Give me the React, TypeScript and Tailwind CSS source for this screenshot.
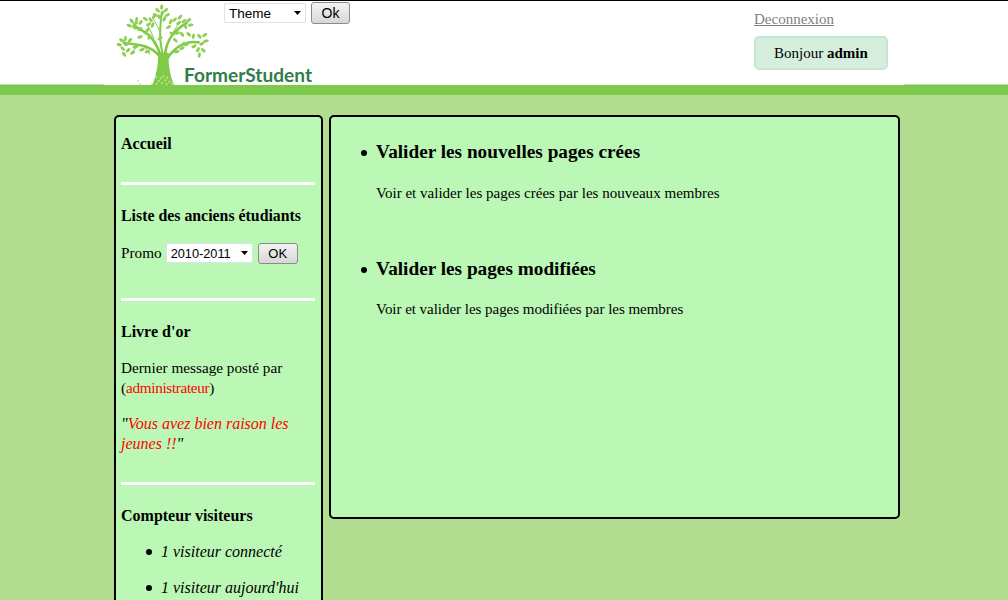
import { ChangeEvent } from 'react';

// leaves of the logo tree: x, y, angle
const leaves = [
  [155, 18, 5], [143, 28, -50], [167, 28, 50], [136, 42, -60], [172, 42, 60], [148, 48, -30], [163, 54, 30], [157, 36, 0],
  [65, 60, -40], [80, 56, 10], [92, 64, 40], [58, 74, -70], [74, 80, -60], [90, 84, 60], [106, 54, -60], [76, 68, 60],
  [122, 56, -40], [116, 70, 60], [132, 46, 30], [112, 88, 30], [128, 72, 20],
  [194, 56, 50], [210, 48, 40], [222, 60, 60], [236, 58, 50], [242, 72, 80], [206, 66, 60], [182, 62, 30], [176, 78, 60], [226, 76, -30],
  [35, 118, -60], [28, 131, -80], [46, 113, 10], [50, 130, 70], [38, 143, -50], [54, 148, 50], [68, 155, 60], [60, 118, 40], [42, 160, -40], [76, 138, 80],
  [96, 146, 70], [112, 152, 80], [118, 108, 30], [90, 108, 70], [150, 112, 60], [186, 98, -60], [202, 96, 70], [216, 100, -40], [196, 118, -50],
  [236, 100, -50], [250, 106, 10], [268, 106, -40], [284, 102, 60], [288, 120, 80], [276, 128, 60], [264, 146, 30], [280, 148, -50], [252, 136, 60], [230, 130, 60], [216, 142, 70], [200, 152, 80], [268, 162, 10],
];

const grass = [
  [132, 236], [138, 228], [146, 240], [152, 232], [160, 226], [166, 238], [172, 230], [178, 242], [140, 248], [156, 246], [170, 250], [186, 248], [126, 248], [84, 240], [90, 250],
];

const TreeLogo = () => (
  <svg viewBox="0 0 300 255" className="w-[100px] h-[85px] shrink-0">
    <g fill="none" stroke="#80ca48" strokeLinecap="round">
      <path d="M158 178C140 150 118 136 88 132S58 128 42 126" strokeWidth="8" />
      <path d="M152 165C142 130 126 104 96 88S80 76 72 72" strokeWidth="8" />
      <path d="M160 165C146 120 150 80 155 35" strokeWidth="6" />
      <path d="M165 160C170 115 192 88 230 66" strokeWidth="8" />
      <path d="M172 172C192 142 222 118 266 124" strokeWidth="8" />
      <path d="M100 132L120 160M132 112L112 70M150 90L128 50M190 92L208 66M222 122L214 146M88 132L66 152" strokeWidth="3" />
    </g>
    <path d="M126 255C138 225 146 190 144 155L176 155C174 195 182 230 194 255Z" fill="#80ca48" />
    <g fill="#8ccf52">
      {leaves.map(([x, y, a], i) => (
        <ellipse key={i} cx={x} cy={y} rx="4.5" ry="8.5" transform={`rotate(${a} ${x} ${y})`} />
      ))}
    </g>
    <g fill="#c5e6a4">
      {grass.map(([x, y], i) => (
        <circle key={i} cx={x} cy={y} r="3" />
      ))}
    </g>
  </svg>
);

const Dropdown = ({ value, className }: { value: string; className: string }) => (
  <div className={`relative shrink-0 ${className}`}>
    <select
      value={value}
      onChange={(_e: ChangeEvent<HTMLSelectElement>) => {}}
      className="appearance-none w-full h-full bg-white border border-[#dbe3ec] rounded-[2px] pl-[4px] text-black outline-none font-['Liberation_Sans',sans-serif] text-[length:inherit]"
    >
      <option>{value}</option>
    </select>
    <svg viewBox="0 0 7 4" className="absolute right-[5px] top-[8px] w-[7px] h-[4px] pointer-events-none">
      <path d="M0 0h7L3.5 4z" fill="#000" />
    </svg>
  </div>
);

const OkButton = ({ label, className }: { label: string; className: string }) => (
  <button className={`shrink-0 border border-[#8b8b8b] rounded-[3px] bg-linear-to-b from-[#f3f3f3] to-[#d7d7d7] text-black font-['Liberation_Sans',sans-serif] leading-none ${className}`}>
    {label}
  </button>
);

const Rule = () => <hr className="border-0 h-[3px] bg-white mr-px" />;

export default function App() {
  return (
    <div className="h-[600px] overflow-hidden bg-[#b2dd91] text-black text-[16px] leading-[20px] font-['Liberation_Serif',serif]">
      <header className="bg-white border-t border-black">
        <div className="mx-[104px] w-[800px] h-[83px] flex">
          <div className="w-[120px] h-[85px] flex items-end pl-[6px] shrink-0">
            <TreeLogo />
            <span className="shrink-0 -ml-[26px] mb-[-1px] font-['Lato',sans-serif] font-bold text-[19.1px] leading-[24px] text-[#2f7d47]">FormerStudent</span>
          </div>
          <div className="flex gap-[5px] items-start pt-[1px] h-[24px]">
            <Dropdown value="Theme" className="w-[82px] h-[20px] mt-[1px] text-[13.5px]" />
            <OkButton label="Ok" className="w-[39px] h-[22px] text-[14px]" />
          </div>
          <div className="ml-[404px] w-[134px] pt-[8px] text-[15px]">
            <a href="#" className="block text-[#7f7f7f] underline">Deconnexion</a>
            <div className="mt-[7px] h-[34px] flex items-center justify-center gap-1 bg-[#d6eede] border-2 border-[#c2e8d0] rounded-[5px]">
              <span>Bonjour <b>admin</b></span>
            </div>
          </div>
        </div>
      </header>
      <div className="h-px bg-[#bfe0a3]">
        <div className="mx-[104px] w-[800px] h-px bg-white" />
      </div>
      <div className="h-[10px] bg-[#7dc94c]" />

      <div className="ml-[114px] mt-[20px] flex items-start gap-[6px]">
        <aside className="w-[209px] shrink-0 bg-[#bbf8b5] border-2 border-black rounded-[5px] px-[5px] pt-[17px] pb-[20px]">
          <h3 className="font-bold">Accueil</h3>
          <div className="mt-[28px]"><Rule /></div>
          <h3 className="font-bold mt-[21px] text-[15.85px]">Liste des anciens étudiants</h3>
          <div className="flex items-center mt-[17px] h-[20px] text-[15.25px]">
            <span>Promo</span>
            <Dropdown value="2010-2011" className="ml-[4px] w-[87px] h-[20px] text-[12.75px]" />
            <OkButton label="OK" className="ml-[5px] w-[40px] h-[21px] text-[13px]" />
          </div>
          <div className="mt-[35px]"><Rule /></div>
          <h3 className="font-bold mt-[21px]">Livre d'or</h3>
          <p className="mt-[16px] text-[15.25px]">Dernier message posté par (<span className="text-[#ff0000] tracking-[-0.35px]">administrateur</span>)</p>
          <p className="mt-[16px] italic"><span>"</span><span className="text-[#ff0000]">Vous avez bien raison les jeunes !!</span><span>"</span></p>
          <div className="mt-[28px]"><Rule /></div>
          <h3 className="font-bold mt-[21px]">Compteur visiteurs</h3>
          <ul className="pl-[40px] italic mt-[16px] flex flex-col gap-[16px]">
            <li className="relative before:absolute before:left-[-15px] before:top-[7px] before:size-[6px] before:rounded-full before:bg-black">1 visiteur connecté</li>
            <li className="relative before:absolute before:left-[-15px] before:top-[7px] before:size-[6px] before:rounded-full before:bg-black">1 visiteur aujourd'hui</li>
          </ul>
        </aside>

        <main className="w-[571px] h-[404px] shrink-0 bg-[#bbf8b5] border-2 border-black rounded-[5px] pl-[5px] pt-[25px]">
          <ul className="pl-[40px] text-[15.05px]">
            <li className="relative before:absolute before:left-[-15px] before:top-[8px] before:size-[6px] before:rounded-full before:bg-black">
              <h3 className="font-bold text-[19.25px] leading-[20px]">Valider les nouvelles pages crées</h3>
              <p className="mt-[21px]">Voir et valider les pages crées par les nouveaux membres</p>
            </li>
            <li className="relative mt-[56px] before:absolute before:left-[-15px] before:top-[8px] before:size-[6px] before:rounded-full before:bg-black">
              <h3 className="font-bold text-[19.25px] leading-[20px]">Valider les pages modifiées</h3>
              <p className="mt-[20px] tracking-[-0.05px]">Voir et valider les pages modifiées par les membres</p>
            </li>
          </ul>
        </main>
      </div>
    </div>
  );
}
